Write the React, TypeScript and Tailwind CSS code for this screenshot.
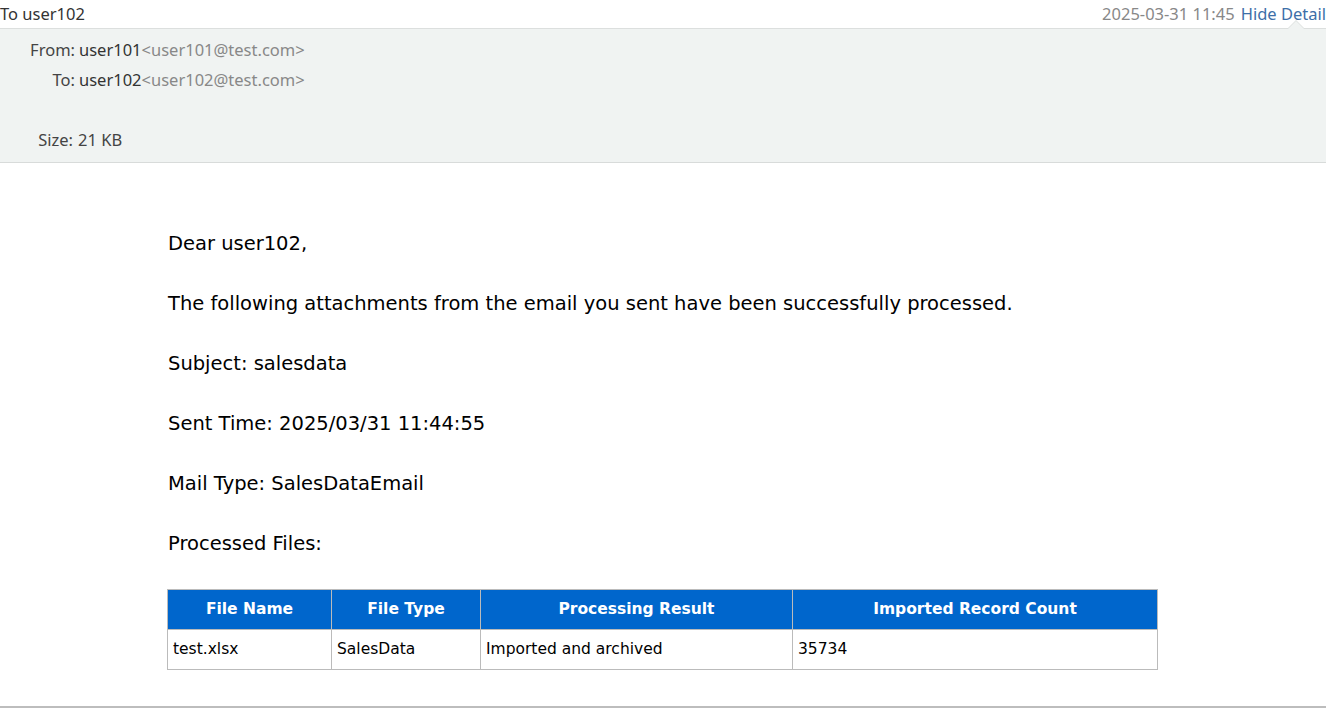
export default function App() {
    const rows = [
        { label: "From:", name: "user101", addr: "<user101@test.com>" },
        { label: "To:", name: "user102", addr: "<user102@test.com>" },
    ];

    return (
        <div className="w-[1326px] bg-white font-['Noto_Sans',sans-serif]">
            {/* title bar */}
            <div className="relative flex h-[29px] items-center justify-between border-b border-[#dcdfde] text-[16.5px]">
                <span className="text-[#333]">To user102</span>
                <div className="flex items-center gap-[6px]">
                    <span className="text-[#888]">2025-03-31 11:45</span>
                    <span className="text-[#3d6fa8]">Hide Detail</span>
                </div>
                <span className="absolute bottom-[-1px] right-[21px] h-0 w-0 border-x-[9px] border-b-[9px] border-x-transparent border-b-[#dcdfde]" />
                <span className="absolute bottom-[-1px] right-[22px] h-0 w-0 border-x-[8px] border-b-[8px] border-x-transparent border-b-[#f0f3f2]" />
            </div>

            {/* detail panel */}
            <div className="h-[134px] border-b border-[#d8dbda] bg-[#f0f3f2] pt-[6px] text-[16.5px]">
                {rows.map((r) => (
                    <div key={r.label} className="flex h-[30px] items-center">
                        <span className="w-[75px] text-right text-[#444]">{r.label}</span>
                        <span className="ml-[4px] text-[#333]">{r.name}</span>
                        <span className="text-[#888]">{r.addr}</span>
                    </div>
                ))}
                <div className="h-[30px]" />
                <div className="flex h-[30px] items-center text-[#444]">
                    <span className="w-[73px] text-right">Size:</span>
                    <span className="ml-[5px]">21 KB</span>
                </div>
            </div>

            {/* message body */}
            <div className="pl-[168px] pt-[71px] font-['DejaVu_Sans',sans-serif] text-[19.5px] text-black">
                <div className="flex flex-col gap-[40px] leading-[20px]">
                    <p>Dear user102,</p>
                    <p>The following attachments from the email you sent have been successfully processed.</p>
                    <p>Subject: salesdata</p>
                    <p>Sent Time: 2025/03/31 11:44:55</p>
                    <p>Mail Type: SalesDataEmail</p>
                    <p>Processed Files:</p>
                </div>

                <table className="ml-[-1px] mt-[35px] w-[991px] border-collapse text-[15.5px]">
                    <thead>
                        <tr className="h-[40px] bg-[#0066cc] text-white">
                            <th className="w-[164px] border border-[#bbb] font-bold">File Name</th>
                            <th className="w-[149px] border border-[#bbb] font-bold">File Type</th>
                            <th className="w-[312px] border border-[#bbb] font-bold">Processing Result</th>
                            <th className="border border-[#bbb] font-bold">Imported Record Count</th>
                        </tr>
                    </thead>
                    <tbody>
                        <tr className="h-[40px]">
                            <td className="border border-[#bbb] px-[5px]">test.xlsx</td>
                            <td className="border border-[#bbb] px-[5px]">SalesData</td>
                            <td className="border border-[#bbb] px-[5px]">Imported and archived</td>
                            <td className="border border-[#bbb] px-[5px]">35734</td>
                        </tr>
                    </tbody>
                </table>
            </div>

            <div className="mt-[36px] h-[2px] bg-[#bdbdbd]" />
        </div>
    );
}
